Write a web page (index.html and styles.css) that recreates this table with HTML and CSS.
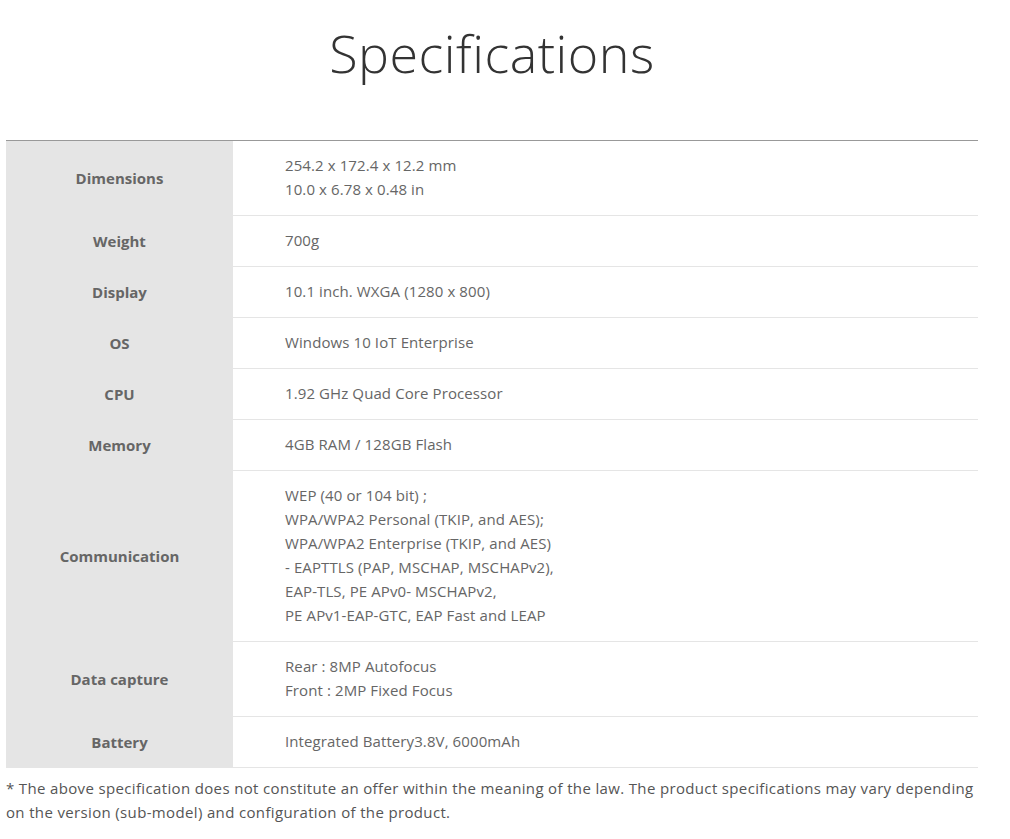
FILE: index.html
```html
<!DOCTYPE html>
<html>
<head>
<meta charset="utf-8">
<link rel="stylesheet" href="styles.css">
</head>
<body>
<div class="wrap">
  <h1 class="title">Specifications</h1>
  <table class="spec">
    <tr><th>Dimensions</th><td>254.2 x 172.4 x 12.2 mm<br>10.0 x 6.78 x 0.48 in</td></tr>
    <tr><th>Weight</th><td>700g</td></tr>
    <tr><th>Display</th><td>10.1 inch. WXGA (1280 x 800)</td></tr>
    <tr><th>OS</th><td>Windows 10 IoT Enterprise</td></tr>
    <tr><th>CPU</th><td>1.92 GHz Quad Core Processor</td></tr>
    <tr><th>Memory</th><td>4GB RAM / 128GB Flash</td></tr>
    <tr><th>Communication</th><td>WEP (40 or 104 bit) ;<br>WPA/WPA2 Personal (TKIP, and AES);<br>WPA/WPA2 Enterprise (TKIP, and AES)<br>- EAPTTLS (PAP, MSCHAP, MSCHAPv2),<br>EAP-TLS, PE APv0- MSCHAPv2,<br>PE APv1-EAP-GTC, EAP Fast and LEAP</td></tr>
    <tr><th>Data capture</th><td>Rear : 8MP Autofocus<br>Front : 2MP Fixed Focus</td></tr>
    <tr><th>Battery</th><td>Integrated Battery3.8V, 6000mAh</td></tr>
  </table>
  <p class="note">* The above specification does not constitute an offer within the meaning of the law. The product specifications may vary depending on the version (sub-model) and configuration of the product.</p>
</div>
</body>
</html>
```

FILE: styles.css
```css
html, body {
  margin: 0;
  padding: 0;
  background: #fff;
}
body {
  font-family: "Open Sans", "Liberation Sans", sans-serif;
  color: #666;
}
.wrap {
  width: 972px;
  margin-left: 6px;
}
.title {
  margin: 0;
  padding-top: 18px;
  height: 140px;
  box-sizing: border-box;
  text-align: center;
  font-weight: 300;
  font-size: 52px;
  line-height: 70px;
  color: #333;
  letter-spacing: 0.5px;
}
.spec {
  width: 100%;
  border-collapse: collapse;
  border-top: 1px solid #999;
  font-size: 15px;
  line-height: 24px;
}
.spec th {
  width: 227px;
  background: #e5e5e5;
  font-weight: 700;
  color: #666;
  text-align: center;
  padding: 13px 0;
  border-bottom: 1px solid #e5e5e5;
  font-size: 15px;
}
.spec td {
  padding: 12px 0 14px 52px;
  border-bottom: 1px solid #e5e5e5;
  color: #666;
  text-align: left;
  letter-spacing: 0.1px;
}
.note {
  margin: 8px 0 0;
  font-size: 15px;
  line-height: 24px;
  color: #555;
  letter-spacing: 0.35px;
}
```
